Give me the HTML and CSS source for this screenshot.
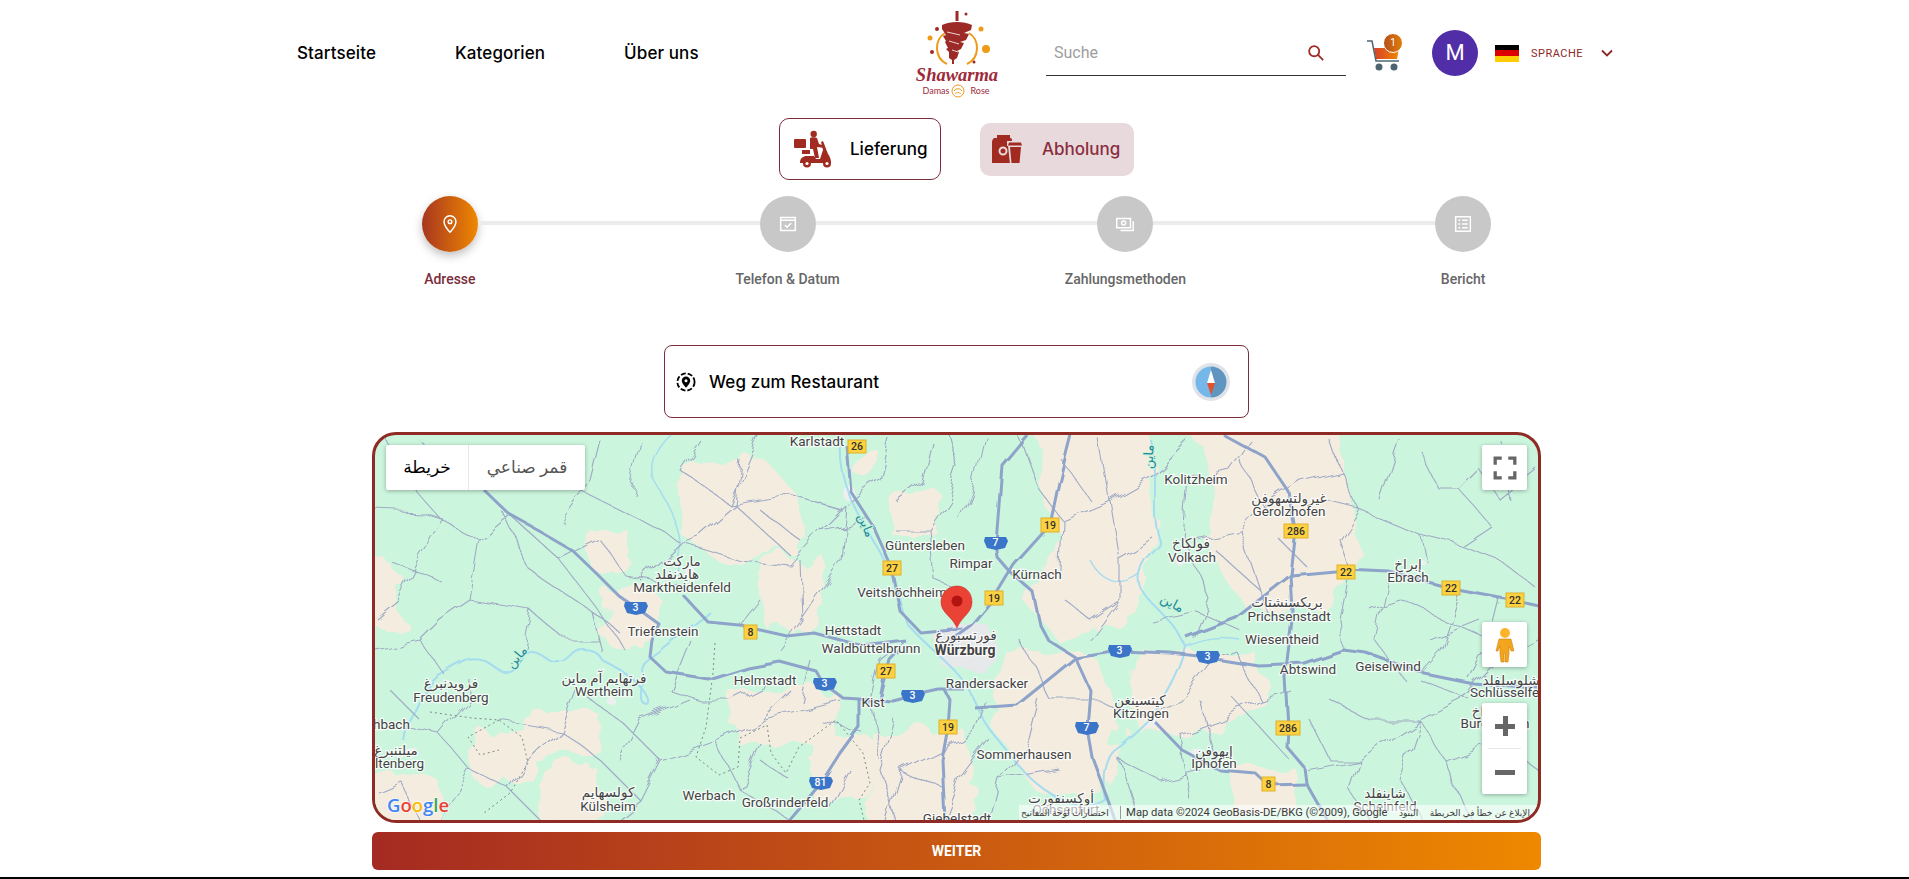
FILE: index.html
```html
<!DOCTYPE html>
<html lang="de">
<head>
    <meta charset="UTF-8">
    <meta content="width=device-width, initial-scale=1.0" name="viewport">
    <title>Shawarma Damas Rose</title>
    <link rel="stylesheet" href="styles.css">
</head>
<body>
<svg width="0" height="0" class="defs">
    <defs>
        <linearGradient id="warm" x1="0" y1="0" x2="1" y2="0">
            <stop offset="0" stop-color="#d8402a"/>
            <stop offset="1" stop-color="#ee8800"/>
        </linearGradient>
        <filter id="rough-land" x="-5%" y="-5%" width="110%" height="110%">
            <feTurbulence type="fractalNoise" baseFrequency="0.028" numOctaves="3" seed="4"/>
            <feDisplacementMap in="SourceGraphic" scale="34"/>
        </filter>
        <filter id="rough-road" x="-5%" y="-5%" width="110%" height="110%">
            <feTurbulence type="fractalNoise" baseFrequency="0.035" numOctaves="2" seed="9"/>
            <feDisplacementMap in="SourceGraphic" scale="16"/>
        </filter>
        <filter id="rough-main" x="-5%" y="-5%" width="110%" height="110%">
            <feTurbulence type="fractalNoise" baseFrequency="0.02" numOctaves="2" seed="2"/>
            <feDisplacementMap in="SourceGraphic" scale="7"/>
        </filter>
    </defs>
</svg>

<header class="topbar">
    <nav class="nav">
        <a>Startseite</a>
        <a>Kategorien</a>
        <a>Über uns</a>
    </nav>
    <svg class="logo" viewBox="912 8 90 92">
        <path class="logo-ring" d="M945 33C934 40 934 58 947 64M969 33C980 40 980 58 967 64"/>
        <path class="logo-meat" d="M955.500 11h3v10h-3zM942 25c8-4 22-4 30 0l-1 5-7 3 5 1-3 6-6 2 4 1-3 6-4 2 2 1-2 6-3 2v4h-2v-4l-3-2v-6l-3-3 2-1-3-6 1-1-3-5 3-1-4-6z"/>
        <path class="logo-slice" d="M947 32l13 3M949 41l10 3M952 50l6 2"/>
        <circle class="logo-orange" cx="986" cy="49" r="4"/>
        <circle class="logo-orange" cx="981" cy="29" r="2.500"/>
        <circle class="logo-orange" cx="930" cy="38" r="2.500"/>
        <circle class="logo-red" cx="932" cy="52" r="2"/>
        <circle class="logo-red" cx="937" cy="29" r="2"/>
        <circle class="logo-red" cx="966" cy="14" r="1.500"/>
        <circle class="logo-red" cx="974" cy="62" r="1.500"/>
        <text class="logo-name" x="957" y="81">Shawarma</text>
        <text class="logo-sub" x="936" y="94">Damas</text>
        <circle class="logo-rose" cx="958" cy="91" r="6"/>
        <path class="logo-rose" d="M954 91c2-3 6-3 8 0M955 94c2-2 4-2 6 0"/>
        <text class="logo-sub" x="980" y="94">Rose</text>
    </svg>
    <div class="search">
        <span class="search-hint">Suche</span>
        <svg class="search-icon" viewBox="0 0 20 20">
            <circle cx="8" cy="8" r="5.600"/>
            <path d="M12.200 12.200L18 18"/>
        </svg>
    </div>
    <div class="cart">
        <svg viewBox="7 7 36 36" width="36" height="36">
            <path class="cart-fill" d="M14 20h25l-2 11H16z"/>
            <path class="cart-line" d="M7 13h5l4 20h23"/>
            <circle class="cart-wheel" cx="19" cy="39" r="3.500"/>
            <circle class="cart-wheel" cx="34" cy="39" r="3.500"/>
        </svg>
        <span class="cart-badge">1</span>
    </div>
    <div class="avatar">M</div>
    <div class="flag"><i></i><i></i><i></i></div>
    <span class="lang">SPRACHE</span>
    <svg class="chevron" viewBox="0 0 12 8"><path d="M1 1.500l5 5 5-5"/></svg>
</header>

<div class="modes">
    <div class="mode mode-on">
        <svg class="mode-icon" viewBox="6 8 38 38">
            <rect x="7" y="17" width="12" height="9" rx="1"/>
            <circle cx="26.700" cy="12" r="3.200"/>
            <path d="M23 16c1-1 6-1 7 0l2 6 6 2v2l-8-1 2 11h-4l-2-9h-3z"/>
            <path d="M15 28h8v4h-8z"/>
            <path d="M13 41c0-5 3-7 7-7h7l2 3h4l3-9-2-8 2-1 5 13c2 3 3 5 3 9H13z"/>
            <circle cx="20" cy="41.500" r="4"/>
            <circle cx="40" cy="41.500" r="4"/>
            <circle class="mode-hole" cx="20" cy="41.500" r="1.600"/>
            <circle class="mode-hole" cx="40" cy="41.500" r="1.600"/>
        </svg>
        <span>Lieferung</span>
    </div>
    <div class="mode mode-off">
        <svg class="mode-icon" viewBox="6 9 32 32">
            <path d="M12 11h13v3H12zM9 14h17c1 1 1 2 1 3v22H7V18c0-2 1-3 2-4z"/>
            <circle class="mode-ring" cx="18" cy="27" r="3.500"/>
            <path class="mode-gap" d="M22 17h15v5h-1l-2 18H25l-2-18h-1z"/>
            <path d="M24 18.500h12l1 3H23zM25 23h11l-1.500 16h-8z"/>
        </svg>
        <span>Abholung</span>
    </div>
</div>

<div class="stepper">
    <div class="step step-on">
        <div class="step-dot">
            <svg viewBox="0 0 24 24"><path d="M12 3a6.500 6.500 0 0 0-6.500 6.500C5.500 14 12 21 12 21s6.500-7 6.500-11.500A6.500 6.500 0 0 0 12 3z"/><circle cx="12" cy="9.500" r="2"/></svg>
        </div>
        <div class="step-label">Adresse</div>
    </div>
    <div class="step">
        <div class="step-dot">
            <svg viewBox="0 0 24 24"><path d="M4 5h16v14H4zM4 8h16M8.500 13l2.500 2.500 4.500-4.500"/></svg>
        </div>
        <div class="step-label">Telefon &amp; Datum</div>
    </div>
    <div class="step">
        <div class="step-dot">
            <svg viewBox="0 0 24 24"><path d="M3 6h15v10H3zM21 9v10H7"/><circle cx="10.500" cy="11" r="2.200"/></svg>
        </div>
        <div class="step-label">Zahlungsmethoden</div>
    </div>
    <div class="step">
        <div class="step-dot">
            <svg viewBox="0 0 24 24"><path d="M4 4h16v16H4zM7 8h2M11 8h6M7 12h2M11 12h6M7 16h2M11 16h6"/></svg>
        </div>
        <div class="step-label">Bericht</div>
    </div>
</div>

<div class="route">
    <svg class="route-icon" viewBox="0 0 20 20">
        <circle class="route-ring" cx="10" cy="10" r="8.600"/>
        <path d="M10 4.500a4.200 4.200 0 0 0-4.200 4.200c0 3 4.200 6.800 4.200 6.800s4.200-3.800 4.200-6.800A4.200 4.200 0 0 0 10 4.500z"/>
        <circle class="route-hole" cx="10" cy="8.700" r="1.500"/>
    </svg>
    <span class="route-text">Weg zum Restaurant</span>
    <svg class="compass" viewBox="0 0 38 38">
        <circle cx="19" cy="19" r="19" fill="#dfe3e8"/>
        <path d="M19 3.500a15.500 15.500 0 0 0 0 31z" fill="#74b7e8"/>
        <path d="M19 3.500a15.500 15.500 0 0 1 0 31z" fill="#5f95be"/>
        <path d="M19 7l-4 13h8z" fill="#fff"/>
        <path d="M15 20h8l-4 12z" fill="#e4502c"/>
    </svg>
</div>

<section class="map">
    <svg class="map-canvas" viewBox="375 435 1163 385" width="1163" height="385">
        <g class="land">
            <path d="M690 470L760 462 795 500 795 552 720 556 683 530z"/>
            <path d="M585 530L625 535 622 572 595 566z"/>
            <path d="M610 595L655 600 652 640 612 640z"/>
            <path d="M770 568L822 562 818 600 790 625 768 622z"/>
            <path d="M892 494L936 496 934 530 895 530z"/>
            <path d="M860 458L880 460 876 474 862 474z"/>
            <path d="M1040 430L1148 430 1150 540 1120 620 1060 636 1030 600 1068 540 1050 500z"/>
            <path d="M1200 434L1340 436 1352 560 1322 610 1250 606 1210 540 1220 500z"/>
            <path d="M1000 660L1090 660 1112 720 1100 790 1040 788 1000 730z"/>
            <path d="M1134 656L1256 660 1256 700 1190 738 1136 720z"/>
            <path d="M1230 770L1290 770 1296 806 1232 808z"/>
            <path d="M478 732L524 732 526 778 480 778z"/>
            <path d="M524 715L592 715 594 748 530 750z"/>
            <path d="M544 770L592 770 594 830 546 830z"/>
            <path d="M730 695L834 695 830 738 740 738z"/>
            <path d="M816 742L868 742 866 798 816 798z"/>
            <path d="M876 735L962 735 964 830 878 830z"/>
            <path d="M366 574L394 574 394 624 366 624z"/>
            <path d="M366 780L430 780 440 830 366 830z"/>
        </g>
        <g class="towns">
            <path class="town-big" d="M928 632L985 622 1000 650 985 672 945 668z"/>
            <circle cx="848" cy="492" r="7"/>
            <circle cx="690" cy="572" r="5"/>
            <circle cx="640" cy="612" r="4"/>
            <circle cx="1150" cy="722" r="6"/>
            <circle cx="1196" cy="752" r="4"/>
            <circle cx="1290" cy="672" r="4"/>
            <circle cx="1180" cy="560" r="5"/>
            <circle cx="610" cy="700" r="4"/>
            <circle cx="1420" cy="560" r="3"/>
            <circle cx="410" cy="750" r="5"/>
        </g>
        <g class="water">
            <path d="M840 440C838 470 845 495 874 542S895 590 908 625C930 650 960 670 971 693S985 725 998 740S1020 770 1036 783C1060 805 1090 810 1105 800C1100 770 1108 755 1113 750C1135 735 1145 722 1155 713C1170 690 1182 665 1186 647C1170 610 1135 600 1140 575S1165 550 1159 538C1150 510 1160 480 1151 440"/>
            <path d="M403 740C405 725 410 718 415 710C425 690 430 678 441 673C462 660 470 655 484 660C495 665 500 674 510 672C520 670 522 652 533 653C546 654 548 665 560 663C570 662 572 650 583 650C595 650 600 655 602 660C618 668 630 675 637 683C645 692 652 702 646 704C636 702 644 685 642 672C642 660 652 660 671 643C690 630 700 625 712 614"/>
            <path class="stream" d="M671 435C655 450 650 465 654 480C665 500 678 520 681 542C680 552 676 562 678 575"/>
            <path class="stream" d="M1140 575C1120 590 1100 580 1090 560M1186 647C1200 640 1220 636 1240 640"/>
        </g>
        <path class="roads-minor" d="M384 435L415 490 442 520 420 555 398 600 376 618M376 510L420 512 444 520M442 520L480 540 510 515 560 560 605 620 625 650M503 512L530 570 590 610 617 630M480 540L470 600 440 620 420 640 376 650M470 600L530 610 565 640 596 640M560 560L600 540 625 575 680 585M682 542L640 580M682 542L740 560 790 565 820 530 845 505M700 440L680 470 730 505 790 495 842 510M740 460L735 505 700 535 682 542M790 495L840 510M735 505L790 555M890 440L880 480 845 505 840 560 800 620M760 435L745 470 730 505M800 560L802 620 780 650M895 530L930 530 950 500 960 470 950 435M930 530L935 580 960 590M985 435L975 480 960 520M1020 435L1040 490 1062 520 1060 570M1062 520L1110 500 1154 475 1190 440M1110 500L1120 560 1120 600 1090 640M1120 560L1155 540M1190 480L1185 540 1210 600 1195 640M1190 480L1230 470 1250 440M1190 540L1240 530 1262 505 1300 480M1240 530L1260 590 1270 615M1215 550L1260 590M1300 480L1340 470 1330 440M1340 470L1360 510 1420 535 1460 545 1490 525 1460 490 1480 470 1500 500 1538 470M1360 510L1340 540 1350 570 1340 620 1345 650M1420 535L1425 560M1460 545L1500 560 1538 590M1388 578L1375 640 1405 680M1460 590L1440 650 1420 672M1500 600L1490 640 1470 680M1538 640L1500 660 1460 700 1420 720 1360 760 1350 790 1370 820M1420 720L1445 760 1500 740 1538 770M1360 760L1306 770M1420 720L1400 780 1420 820M1445 760L1470 820M1500 740L1480 790M1290 690L1260 700 1220 720 1180 735M1260 700L1235 650 1210 660 1180 700 1140 715M1180 735L1190 800M1050 700L1100 700 1130 715M1050 700L1020 640M1220 770L1200 700M1235 700L1290 760M990 820L1000 780 1030 740 1040 700M945 820L960 780 990 740M985 700L975 730 960 740 900 770 885 820M895 720L880 770 895 820M870 700L880 760M790 820L740 790 715 740 760 720 790 690M760 720L800 710 840 700M715 740L660 760 640 800 615 820M660 760L620 720 590 700M640 800L600 760 560 730 530 760 510 790 470 770 440 735 376 720M560 730L575 690M510 790L540 820M470 770L440 820M420 820L400 780 376 790M740 790L760 740M690 640L670 690 700 700 720 700M700 700L730 700 770 680M800 700L810 660M905 640L880 660 870 700M420 440L440 470 470 480 500 455M560 480L600 500 640 520 680 542M600 440L590 480 560 520M640 440L630 490M520 460L560 480M390 560L440 580M530 610L520 660M420 640L440 670M590 610L600 650M760 600L740 625M820 530L870 520M760 510L800 540M930 440L920 480 895 500M1062 460L1090 500M1100 440L1110 500M1065 600L1090 620 1120 600M1150 620L1195 610 1240 630M1240 460L1262 505M1280 540L1310 570M1320 500L1360 510M1420 450L1440 490 1460 490M1400 440L1380 500M1500 440L1510 500M1400 600L1445 620 1490 640M1370 610L1400 600M1430 640L1480 620M1420 680L1470 700M1330 700L1370 720 1420 720M1310 720L1330 760 1360 760M1120 760L1160 780 1200 770M1120 760L1140 820M1000 780L1060 770M900 770L945 790M820 720L860 730M640 720L690 700M640 720L620 760M560 730L500 720M440 735L470 700 470 680M390 690L420 720M760 760L790 780M830 810L850 770"/>
        <path class="borders" d="M430 712L472 718 499 720 522 737 528 763 510 793 484 813M499 720L468 737 480 755 499 750M715 643L713 673 706 727 696 757 719 775 738 767 740 738 767 725 771 753 786 773 799 747 836 720 863 753 870 783 859 800 864 820"/>
        <g class="roads-major">
            <path d="M484 490L510 515 541 532 572 550 595 572 618 595 635 607 660 625 652 640 650 657 667 673 709 680 748 668 780 662 817 672 824 684 843 698 859 699 893 701 912 696 939 690 965 690"/>
            <path d="M975 708L1017 705 1048 680 1075 658 1120 651 1170 653 1208 657 1258 665 1304 663 1343 650 1366 653 1419 672 1473 683 1538 688"/>
            <path d="M1027 435L1002 465 1000 492 996 543 998 558 1010 572 1033 592 1040 625 1048 640 1075 657 1090 690 1087 728 1092 757 1109 803 1115 820"/>
            <path d="M1071 435L1059 482 1050 525 1014 565 994 598 971 625 950 640"/>
            <path d="M847 445L851 492 874 528 892 568 901 612 920 632 962 628"/>
            <path d="M859 700L859 727 840 753 821 783 790 820"/>
            <path d="M683 595L709 623 750 627 786 635 813 632 862 645 905 640"/>
            <path d="M1224 435L1266 458 1289 492 1296 530 1291 575 1293 612 1285 677 1288 727 1287 747 1304 767 1306 783 1327 820"/>
            <path d="M1186 637L1236 618 1291 575 1346 570 1389 572 1451 588 1515 600 1538 605"/>
            <path d="M1155 722L1182 750 1220 770 1255 773 1268 785 1306 784"/>
            <path d="M885 671L880 700 890 660 900 650M948 727L950 700 945 690M948 727L942 760 945 820"/>
        </g>

        <g class="lbl">
            <text x="817" y="446">Karlstadt</text>
            <text x="925" y="550">Güntersleben</text>
            <text x="971" y="568">Rimpar</text>
            <text x="682" y="566">ماركت</text>
            <text x="677" y="579">هايدنفلد</text>
            <text x="682" y="592">Marktheidenfeld</text>
            <text x="902" y="597">Veitshöchheim</text>
            <text x="663" y="636">Triefenstein</text>
            <text x="853" y="635">Hettstadt</text>
            <text x="871" y="653">Waldbüttelbrunn</text>
            <text x="1037" y="579">Kürnach</text>
            <text x="1196" y="484">Kolitzheim</text>
            <text x="1289" y="503">غيرولتسهوفن</text>
            <text x="1289" y="516">Gerolzhofen</text>
            <text x="1191" y="548">فولكاخ</text>
            <text x="1192" y="562">Volkach</text>
            <text x="1408" y="569">إبراخ</text>
            <text x="1408" y="582">Ebrach</text>
            <text x="1287" y="607">بريكسنشتات</text>
            <text x="1289" y="621">Prichsenstadt</text>
            <text x="1282" y="644">Wiesentheid</text>
            <text x="1308" y="674">Abtswind</text>
            <text x="1388" y="671">Geiselwind</text>
            <text x="1511" y="685">شلوسلفلد</text>
            <text x="1510" y="697">Schlüsselfeld</text>
            <text x="1496" y="716">بورغبراخ</text>
            <text x="1495" y="728">Burgebrach</text>
            <text x="451" y="688">فرويدنبرغ</text>
            <text x="451" y="702">Freudenberg</text>
            <text x="604" y="683">فرتهايم آم ماين</text>
            <text x="604" y="696">Wertheim</text>
            <text x="765" y="685">Helmstadt</text>
            <text x="873" y="707">Kist</text>
            <text x="987" y="688">Randersacker</text>
            <text x="1140" y="705">كيتسينغن</text>
            <text x="1141" y="718">Kitzingen</text>
            <text x="1024" y="759">Sommerhausen</text>
            <text x="1214" y="756">إيهوفن</text>
            <text x="1214" y="768">Iphofen</text>
            <text x="1061" y="803">أوكسنفورت</text>
            <text x="1066" y="814">Ochsenfurt</text>
            <text x="1385" y="798">شاينفلد</text>
            <text x="1385" y="811">Scheinfeld</text>
            <text x="380" y="729">Aschbach</text>
            <text x="396" y="755">ميلتنبرغ</text>
            <text x="392" y="768">Miltenberg</text>
            <text x="608" y="797">كولسهايم</text>
            <text x="608" y="811">Külsheim</text>
            <text x="709" y="800">Werbach</text>
            <text x="785" y="807">Großrinderfeld</text>
            <text x="957" y="823">Giebelstadt</text>
        </g>
        <text class="lbl-city" x="966" y="640">فورتسبورغ</text>
        <text class="lbl-city lbl-bold" x="965" y="655">Würzburg</text>
        <text class="lbl-river" transform="translate(862 527) rotate(68)">ماين</text>
        <text class="lbl-river" transform="translate(1153 457) rotate(-88)">ماين</text>
        <text class="lbl-river" transform="translate(1170 607) rotate(28)">ماين</text>
        <text class="lbl-river" transform="translate(520 660) rotate(-50)">ماين</text>

        <g class="yellow">
            <rect x="848" y="440" width="18" height="13"/><text x="857" y="450">26</text>
            <rect x="883" y="561" width="18" height="14"/><text x="892" y="572">27</text>
            <rect x="744" y="625" width="13" height="14"/><text x="750.500" y="636">8</text>
            <rect x="1041" y="518" width="18" height="14"/><text x="1050" y="529">19</text>
            <rect x="985" y="591" width="18" height="14"/><text x="994" y="602">19</text>
            <rect x="1284" y="524" width="24" height="14"/><text x="1296" y="535">286</text>
            <rect x="1337" y="565" width="18" height="14"/><text x="1346" y="576">22</text>
            <rect x="1442" y="581" width="18" height="14"/><text x="1451" y="592">22</text>
            <rect x="1506" y="593" width="18" height="14"/><text x="1515" y="604">22</text>
            <rect x="877" y="664" width="18" height="14"/><text x="886" y="675">27</text>
            <rect x="939" y="720" width="18" height="14"/><text x="948" y="731">19</text>
            <rect x="1276" y="721" width="24" height="14"/><text x="1288" y="732">286</text>
            <rect x="1262" y="777" width="13" height="14"/><text x="1268.500" y="788">8</text>
        </g>
        <g class="blue">
            <path d="M625 602h21l2 4-3 7-9 2-9-2-3-7z"/><text x="635.500" y="611">3</text>
            <path d="M985 537h21l2 4-3 7-9 2-9-2-3-7z"/><text x="995.500" y="546">7</text>
            <path d="M814 678h21l2 4-3 7-9 2-9-2-3-7z"/><text x="824.500" y="687">3</text>
            <path d="M902 690h21l2 4-3 7-9 2-9-2-3-7z"/><text x="912.500" y="699">3</text>
            <path d="M1109 645h21l2 4-3 7-9 2-9-2-3-7z"/><text x="1119.500" y="654">3</text>
            <path d="M1197 651h21l2 4-3 7-9 2-9-2-3-7z"/><text x="1207.500" y="660">3</text>
            <path d="M1076 722h21l2 4-3 7-9 2-9-2-3-7z"/><text x="1086.500" y="731">7</text>
            <path d="M810 777h21l2 4-3 7-9 2-9-2-3-7z"/><text x="820.500" y="786">81</text>
        </g>

        <path class="pin" d="M957 586c-9 0-16 7-16 16 0 11 11 14 16 26 5-12 15-15 15-26 0-9-6-16-15-16z"/>
        <circle class="pin-dot" cx="957" cy="601" r="5.500"/>

        <text class="google" x="387" y="812"><tspan fill="#4285f4">G</tspan><tspan fill="#ea4335">o</tspan><tspan fill="#fbbc05">o</tspan><tspan fill="#4285f4">g</tspan><tspan fill="#34a853">l</tspan><tspan fill="#ea4335">e</tspan></text>
    </svg>

    <div class="map-type">
        <span class="map-type-on">خريطة</span>
        <span class="map-type-off">قمر صناعي</span>
    </div>
    <div class="map-btn map-full">
        <svg viewBox="-2 -2 22 22" width="24" height="24"><path d="M0 6V0h6M12 0h6v6M18 12v6h-6M6 18H0v-6"/></svg>
    </div>
    <div class="map-btn map-peg">
        <svg viewBox="0 0 20 36" width="20" height="36">
            <circle cx="10" cy="6" r="5" fill="#fdb42b"/>
            <path d="M4 12h12l3 12h-3l-2-5v8l-1 8h-3v-9h-1v9H6l-1-8v-8l-2 5H1z" fill="#f2a51d" stroke="#c98512" stroke-width=".6"/>
        </svg>
    </div>
    <div class="map-zoom">
        <div class="map-zoom-key"><span class="zoom-plus"></span></div>
        <div class="map-zoom-key"><span class="zoom-minus"></span></div>
    </div>
    <div class="attrib">
        <span>اختصارات لوحة المفاتيح</span>
        <span class="attrib-data">Map data ©2024 GeoBasis-DE/BKG (©2009), Google</span>
        <span>البنود</span>
        <span>الإبلاغ عن خطأ في الخريطة</span>
    </div>
</section>

<button class="next">WEITER</button>
<div class="pagefoot"></div>
</body>
</html>
```

FILE: styles.css
```css
* {
    box-sizing: border-box;
}

html, body {
    height: 879px;
    overflow: hidden;
}

body {
    margin: 0;
    background: #fff;
    font-family: Roboto, "DejaVu Sans", sans-serif;
}

.defs {
    position: absolute;
}

/* header */
.topbar {
    display: flex;
    align-items: center;
    height: 106px;
    padding-left: 297px;
}

.nav {
    display: flex;
    gap: 79px;
    width: 615px;
    font-family: Inter, sans-serif;
    font-size: 17px;
    font-weight: 500;
    letter-spacing: 0.1px;
    color: #000;
}

.logo {
    width: 90px;
    height: 92px;
    margin-top: 2px;
}

.logo-ring {
    fill: none;
    stroke: #ee9a1a;
    stroke-width: 2;
}

.logo-meat {
    fill: #9c2a26;
}

.logo-slice {
    fill: none;
    stroke: #fff;
    stroke-width: 0.800;
}

.logo-orange {
    fill: #ee9a1a;
}

.logo-red {
    fill: #9c2a26;
}

.logo-name {
    font-family: "Liberation Serif", serif;
    font-size: 18.500px;
    font-style: italic;
    font-weight: 700;
    text-anchor: middle;
    fill: #9c2a3a;
}

.logo-sub {
    font-family: Lato, sans-serif;
    font-size: 9px;
    text-anchor: middle;
    fill: #9c2a3a;
}

.logo-rose {
    fill: none;
    stroke: #ee9a1a;
    stroke-width: 1;
}

.search {
    display: flex;
    align-items: center;
    justify-content: space-between;
    width: 300px;
    height: 46px;
    margin-left: 44px;
    padding: 0 21px 0 8px;
    border-bottom: 1px solid #333;
}

.search-hint {
    font-size: 16px;
    color: #9e9e9e;
}

.search-icon {
    width: 18px;
    height: 18px;
    fill: none;
    stroke: #a12b24;
    stroke-width: 2;
}

.cart {
    position: relative;
    width: 36px;
    height: 36px;
    margin-left: 21px;
}

.cart svg {
    display: block;
    overflow: visible;
}

.cart-fill {
    fill: url(#warm);
}

.cart-line {
    fill: none;
    stroke: #4e6570;
    stroke-width: 1.500;
}

.cart-wheel {
    fill: #4e6570;
}

.cart-badge {
    position: absolute;
    top: -2px;
    right: 0;
    width: 20px;
    height: 20px;
    border: 1px solid #fff;
    border-radius: 50%;
    background: linear-gradient(to right, #b5501a, #e07d0a);
    font-size: 10px;
    line-height: 18px;
    text-align: center;
    color: #fff;
}

.avatar {
    width: 46px;
    height: 46px;
    margin-left: 29px;
    border-radius: 50%;
    background: #512da8;
    font-size: 22px;
    line-height: 46px;
    text-align: center;
    color: #fff;
}

.flag {
    display: flex;
    flex-direction: column;
    width: 24px;
    height: 17px;
    margin-left: 17px;
}

.flag i {
    flex: 1;
    background: #000;
}

.flag i:nth-child(2) {
    background: #dd0000;
}

.flag i:nth-child(3) {
    background: #ffce00;
}

.lang {
    margin-left: 12px;
    font-size: 11px;
    letter-spacing: 0.5px;
    color: #8c2a25;
}

.chevron {
    width: 12px;
    height: 8px;
    margin-left: 18px;
    fill: none;
    stroke: #8c2a25;
    stroke-width: 1.800;
}

/* delivery or pickup */
.modes {
    display: flex;
    align-items: center;
    height: 62px;
    margin: 12px 0 0 779px;
    gap: 39px;
}

.mode {
    display: flex;
    align-items: center;
    font-family: Inter, sans-serif;
    font-size: 17px;
    font-weight: 500;
}

.mode-on {
    width: 162px;
    height: 62px;
    padding-left: 13px;
    gap: 19px;
    border: 1px solid #7b2d3b;
    border-radius: 10px;
    color: #000;
}

.mode-off {
    width: 154px;
    height: 53px;
    padding-left: 11px;
    gap: 19px;
    border-radius: 10px;
    background: #e8d9dc;
    color: #8a2d3f;
}

.mode-icon {
    width: 38px;
    height: 38px;
    fill: #a12b20;
}

.mode-off .mode-icon {
    width: 32px;
    height: 32px;
}

.mode-hole {
    fill: #fff;
}

.mode-ring {
    fill: none;
    stroke: #e8d9dc;
    stroke-width: 2;
}

.mode-gap {
    fill: #e8d9dc;
}

/* steps */
.stepper {
    display: grid;
    grid-template-columns: repeat(4, 1fr);
    width: 1351px;
    margin: 16px 0 0 281px;
}

.step {
    position: relative;
    display: flex;
    flex-direction: column;
    align-items: center;
}

.step + .step::before {
    content: "";
    position: absolute;
    top: 25px;
    left: calc(-50% + 28px);
    right: calc(50% + 28px);
    height: 4px;
    background: #ececef;
}

.step-dot {
    display: flex;
    align-items: center;
    justify-content: center;
    width: 56px;
    height: 56px;
    border-radius: 50%;
    background: #c8c8c8;
}

.step-dot svg {
    width: 22px;
    height: 22px;
    fill: none;
    stroke: #fff;
    stroke-width: 1.600;
}

.step-on .step-dot {
    background: linear-gradient(to right, #a8361f, #ee8800);
    box-shadow: 0 4px 10px rgba(0, 0, 0, 0.25);
}

.step-label {
    margin-top: 17px;
    font-size: 14px;
    font-weight: 500;
    line-height: 20px;
    color: #666;
}

.step-on .step-label {
    color: #7b2d3b;
}

/* route box */
.route {
    display: flex;
    align-items: center;
    width: 585px;
    height: 73px;
    margin: 56px 0 0 664px;
    padding: 0 18px 0 11px;
    border: 1px solid #7b2d3b;
    border-radius: 8px;
}

.route-icon {
    width: 20px;
    height: 20px;
    fill: #000;
}

.route-ring {
    fill: none;
    stroke: #000;
    stroke-width: 1.800;
    stroke-dasharray: 5 2;
}

.route-hole {
    fill: #fff;
}

.route-text {
    flex: 1;
    margin-left: 13px;
    font-family: Inter, sans-serif;
    font-size: 17px;
    font-weight: 500;
    letter-spacing: 0.1px;
    color: #000;
}

.compass {
    width: 38px;
    height: 38px;
}

/* map */
.map {
    position: relative;
    width: 1169px;
    height: 391px;
    margin: 14px 0 0 372px;
    border: 3px solid #8f2a24;
    border-radius: 24px;
    overflow: hidden;
    background: #cbf5dc;
}

.map-canvas {
    display: block;
}

.land {
    filter: url(#rough-land);
}

.land path {
    fill: #f3ecdf;
    stroke: #f3ecdf;
    stroke-width: 10;
    stroke-linejoin: round;
}

.towns {
    filter: url(#rough-road);
    fill: #eef0f0;
}

.town-big {
    fill: #e6e8ea;
}

.water {
    filter: url(#rough-main);
}

.water path {
    fill: none;
    stroke: #a6dcf0;
    stroke-width: 2;
    stroke-linejoin: round;
}

.water .stream {
    stroke-width: 1.500;
}

.roads-minor {
    fill: none;
    stroke: #a0aac6;
    stroke-width: 1.100;
    stroke-linejoin: round;
    filter: url(#rough-road);
}

.borders {
    fill: none;
    stroke: #7d8a8a;
    stroke-width: 1;
    stroke-dasharray: 2 3;
}

.roads-major {
    filter: url(#rough-main);
}

.roads-major path {
    fill: none;
    stroke: #8ea3ca;
    stroke-width: 3;
    stroke-linejoin: round;
}

.lbl text,
.lbl-city {
    font-family: Roboto, "DejaVu Sans", sans-serif;
    font-size: 13.500px;
    text-anchor: middle;
    fill: #444;
    stroke: #fff;
    stroke-width: 2.500;
    stroke-opacity: 0.8;
    paint-order: stroke;
}

.lbl-bold {
    font-size: 14px;
    font-weight: 700;
}

.lbl-river {
    font-family: "DejaVu Sans", sans-serif;
    font-size: 13px;
    text-anchor: middle;
    fill: #1a8a9a;
    stroke: #c9f3da;
    stroke-width: 2;
    paint-order: stroke;
}

.yellow rect {
    fill: #fdd13f;
    stroke: #e0b02a;
    stroke-width: 1;
}

.yellow text,
.blue text {
    font-family: Roboto, sans-serif;
    font-size: 10.500px;
    font-weight: 500;
    text-anchor: middle;
}

.yellow text {
    fill: #333;
}

.blue path {
    fill: #3b75c9;
}

.blue text {
    fill: #fff;
}

.pin {
    fill: #ea4335;
    stroke: #c5221f;
    stroke-width: 0.500;
}

.pin-dot {
    fill: #b31412;
}

.google {
    font-family: "Open Sans", sans-serif;
    font-size: 18.500px;
    font-weight: 600;
    stroke: #fff;
    stroke-width: 1.500;
    stroke-opacity: 0.7;
    paint-order: stroke;
}

.map-type {
    position: absolute;
    top: 10px;
    left: 11px;
    display: flex;
    width: 199px;
    height: 45px;
    background: #fff;
    border-radius: 2px;
    box-shadow: 0 1px 4px rgba(0, 0, 0, 0.3);
    font-size: 17px;
    line-height: 45px;
    text-align: center;
}

.map-type-on {
    width: 83px;
    border-right: 1px solid #e6e6e6;
    color: #000;
}

.map-type-off {
    flex: 1;
    color: #565656;
}

.map-btn {
    position: absolute;
    right: 11px;
    display: flex;
    align-items: center;
    justify-content: center;
    width: 45px;
    height: 45px;
    background: #fff;
    border-radius: 2px;
    box-shadow: 0 1px 4px rgba(0, 0, 0, 0.3);
}

.map-full {
    top: 10px;
}

.map-full path {
    fill: none;
    stroke: #666;
    stroke-width: 3;
}

.map-peg {
    top: 187px;
}

.map-zoom {
    position: absolute;
    top: 268px;
    right: 11px;
    width: 45px;
    height: 91px;
    background: #fff;
    border-radius: 2px;
    box-shadow: 0 1px 4px rgba(0, 0, 0, 0.3);
}

.map-zoom-key {
    position: relative;
    height: 45px;
}

.map-zoom-key + .map-zoom-key {
    height: 46px;
    border-top: 1px solid #e6e6e6;
    margin: 0 6px;
}

.zoom-plus,
.zoom-minus {
    position: absolute;
    top: 50%;
    left: 50%;
    width: 20px;
    height: 5px;
    margin: -2px 0 0 -10px;
    background: #666;
}

.zoom-plus::after {
    content: "";
    position: absolute;
    top: -8px;
    left: 8px;
    width: 5px;
    height: 20px;
    background: #666;
}

.attrib {
    position: absolute;
    right: 0;
    bottom: 0;
    display: flex;
    align-items: center;
    justify-content: space-between;
    width: 519px;
    height: 15px;
    padding: 0 8px 0 2px;
    background: rgba(255, 255, 255, 0.6);
    font-size: 9px;
    color: #3c3c3c;
    white-space: nowrap;
}

.attrib-data {
    padding-left: 5px;
    border-left: 1px solid #999;
    font-size: 11.200px;
}

/* bottom */
.next {
    display: block;
    width: 1169px;
    height: 38px;
    margin: 9px 0 0 372px;
    border: 0;
    border-radius: 6px;
    background: linear-gradient(to right, #a52a22, #ee8800);
    font-family: Roboto, sans-serif;
    font-size: 14px;
    font-weight: 700;
    color: #fff;
}

.pagefoot {
    height: 2px;
    margin-top: 7px;
    background: #000;
}
```
